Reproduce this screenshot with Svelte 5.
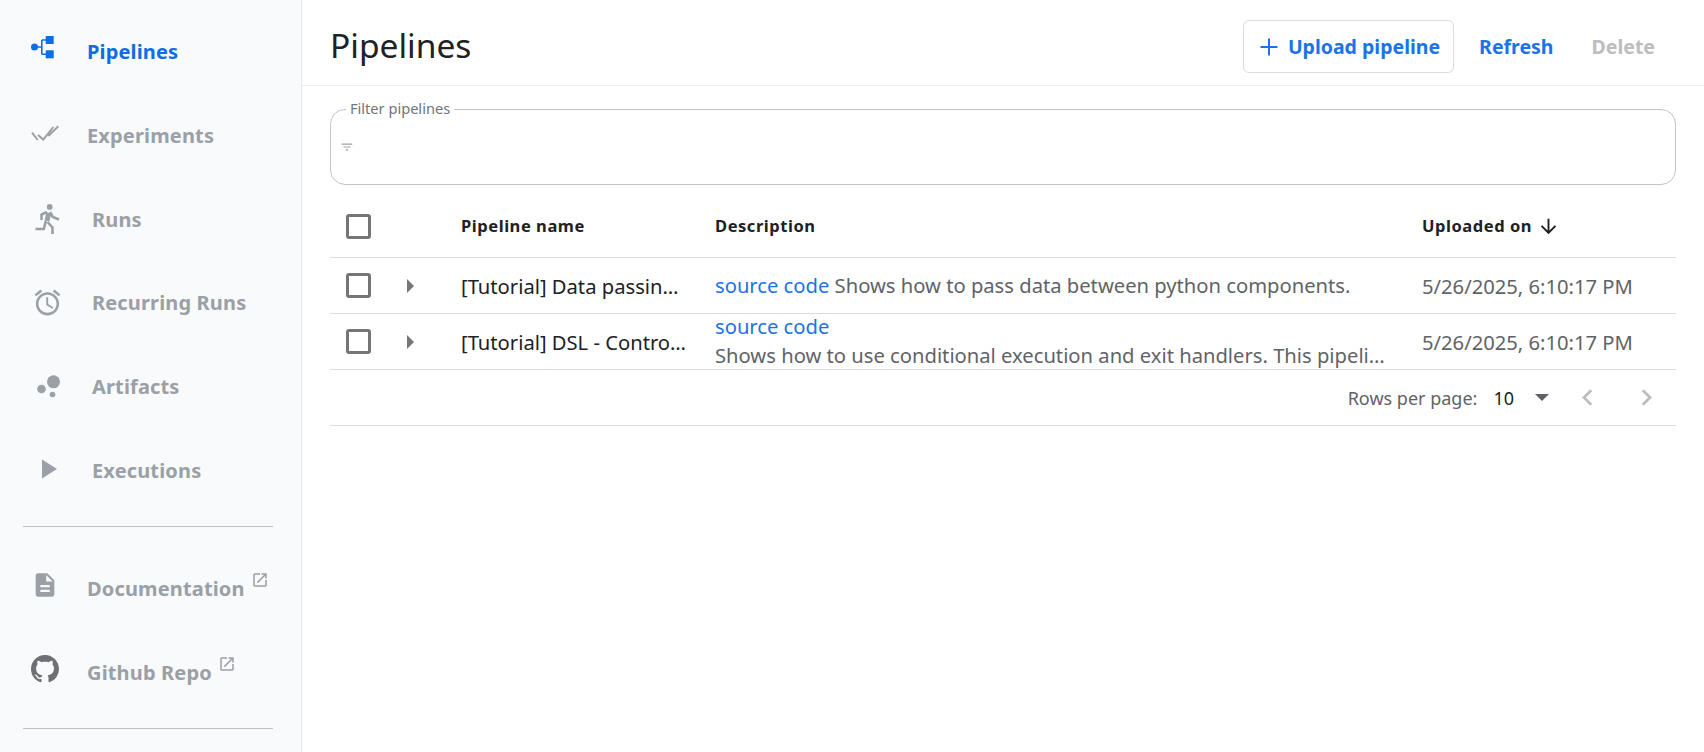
<script lang="ts">
  const navTop = [
    { label: 'Pipelines', icon: 'pipelines', active: true, indent: false },
    { label: 'Experiments', icon: 'experiments', active: false, indent: false },
    { label: 'Runs', icon: 'runs', active: false, indent: true },
    { label: 'Recurring Runs', icon: 'recurring', active: false, indent: true },
    { label: 'Artifacts', icon: 'artifacts', active: false, indent: true },
    { label: 'Executions', icon: 'executions', active: false, indent: true }
  ];

  const rows = [
    {
      name: '[Tutorial] Data passing in python components',
      inline: true,
      desc: 'Shows how to pass data between python components.',
      date: '5/26/2025, 6:10:17 PM'
    },
    {
      name: '[Tutorial] DSL - Control structures',
      inline: false,
      desc: 'Shows how to use conditional execution and exit handlers. This pipeline will randomly fail to demonstrate that the exit handler gets executed even when the pipeline fails.',
      date: '5/26/2025, 6:10:17 PM'
    }
  ];
</script>

{#snippet externalIcon()}
  <svg class="ext" viewBox="0 0 24 24" aria-hidden="true">
    <path d="M19 19H5V5h7V3H5a2 2 0 0 0-2 2v14a2 2 0 0 0 2 2h14c1.100 0 2-.9 2-2v-7h-2v7zM14 3v2h3.590l-9.830 9.830 1.410 1.410L19 6.410V10h2V3h-7z" />
  </svg>
{/snippet}

{#snippet checkbox()}
  <span class="checkbox"></span>
{/snippet}

<div class="app">
  <nav class="sidebar">
    <ul class="nav-list">
      {#each navTop as item}
        <li class="nav-item" class:active={item.active} class:indent={item.indent}>
          <span class="nav-icon icon-{item.icon}">
            {#if item.icon === 'pipelines'}
              <svg width="24" height="24" viewBox="0 0 24 24">
                <circle cx="3.500" cy="12" r="3.500" />
                <rect x="14.700" y="1" width="8" height="8" />
                <rect x="14.700" y="15.300" width="8" height="8" />
                <path class="line" stroke-width="1.600" d="M6 12h5M10.800 5v14.300M10.800 5H15M10.800 19.300H15" />
              </svg>
            {:else if item.icon === 'experiments'}
              <svg width="28" height="18" viewBox="0 0 28 18">
                <path class="line" stroke-width="2" d="M1 8.700L6.700 16M7 11L12.300 15.500L22.300 3M17.300 12L27.300 2.300" />
              </svg>
            {:else if item.icon === 'runs'}
              <svg width="25" height="31" viewBox="0 0 25 31">
                <circle cx="14.700" cy="2.900" r="2.900" />
                <path class="line" stroke-width="5" d="M13.800 9L12 17" />
                <path class="line" stroke-width="2.600" d="M12 8L6.500 10.500V16M15 8L17.800 13L24 15.500M10.800 17L8.800 25H.5M12.500 18L17.500 23.500V30" />
              </svg>
            {:else if item.icon === 'recurring'}
              <svg width="31" height="31" viewBox="0 0 24 24">
                <path d="M22 5.720l-4.600-3.860-1.290 1.530 4.600 3.860L22 5.720zM7.880 3.390 6.600 1.860 2 5.710l1.290 1.530 4.590-3.850zM12.500 8H11v6l4.750 2.850.75-1.230-4-2.370V8zM12 4c-4.970 0-9 4.030-9 9s4.030 9 9 9 9-4.030 9-9-4.030-9-9-9zm0 16c-3.870 0-7-3.130-7-7s3.130-7 7-7 7 3.130 7 7-3.130 7-7 7z" />
              </svg>
            {:else if item.icon === 'artifacts'}
              <svg width="24" height="24" viewBox="0 0 24 24">
                <circle cx="4.500" cy="14" r="4.300" />
                <circle cx="16.500" cy="6.800" r="6.500" />
                <circle cx="15.500" cy="19.500" r="2.800" />
              </svg>
            {:else if item.icon === 'executions'}
              <svg width="18" height="22" viewBox="0 0 18 22">
                <path d="M2 1.500v19L17 11z" />
              </svg>
            {/if}
          </span>
          <span class="nav-label">{item.label}</span>
        </li>
      {/each}
    </ul>

    <hr class="divider" />

    <a class="nav-item" href="#docs">
      <span class="nav-icon icon-link">
        <svg width="28" height="28" viewBox="0 0 24 24">
          <path d="M14 2H6c-1.100 0-1.990.9-1.990 2L4 20c0 1.100.89 2 1.990 2H18c1.100 0 2-.9 2-2V8l-6-6zm2 16H8v-2h8v2zm0-4H8v-2h8v2zm-3-5V3.500L18.500 9H13z" />
        </svg>
      </span>
      <span class="nav-label">Documentation</span>
      {@render externalIcon()}
    </a>

    <a class="nav-item" href="#github">
      <span class="nav-icon icon-link github">
        <svg width="28" height="28" viewBox="0 0 16 16">
          <path d="M8 0C3.580 0 0 3.580 0 8c0 3.540 2.290 6.530 5.470 7.590.4.070.55-.17.55-.38 0-.19-.01-.82-.01-1.490-2.010.37-2.530-.49-2.690-.94-.09-.23-.48-.94-.82-1.130-.28-.15-.68-.52-.01-.53.63-.01 1.080.58 1.230.82.720 1.210 1.870.87 2.330.66.070-.52.280-.87.510-1.070-1.780-.2-3.640-.89-3.640-3.950 0-.87.310-1.590.820-2.150-.08-.2-.36-1.020.08-2.120 0 0 .67-.21 2.200.82.640-.18 1.320-.27 2-.27s1.360.09 2 .27c1.530-1.040 2.200-.82 2.200-.82.440 1.100.16 1.920.08 2.120.51.560.82 1.270.82 2.150 0 3.070-1.870 3.750-3.650 3.950.29.250.54.730.54 1.480 0 1.070-.01 1.930-.01 2.200 0 .21.150.46.550.38A8.010 8.010 0 0 0 16 8c0-4.420-3.580-8-8-8z" />
        </svg>
      </span>
      <span class="nav-label">Github Repo</span>
      {@render externalIcon()}
    </a>

    <hr class="divider last" />
  </nav>

  <main class="content">
    <header class="toolbar">
      <h1 class="title">Pipelines</h1>
      <div class="actions">
        <button class="btn outlined">
          <svg class="plus" width="24" height="24" viewBox="0 0 24 24" aria-hidden="true">
            <path d="M12 3.500v17M3.500 12h17" />
          </svg>
          Upload pipeline
        </button>
        <button class="btn">Refresh</button>
        <button class="btn disabled">Delete</button>
      </div>
    </header>

    <section class="body">
      <fieldset class="filter">
        <legend>Filter pipelines</legend>
        <svg class="filter-icon" width="14" height="14" viewBox="0 0 24 24" aria-hidden="true">
          <path d="M10 18h4v-2h-4v2zM3 6v2h18V6H3zm3 7h12v-2H6v2z" />
        </svg>
      </fieldset>

      <div class="thead row">
        <div class="c-check">{@render checkbox()}</div>
        <div class="c-expand"></div>
        <div class="c-name">Pipeline name</div>
        <div class="c-desc">Description</div>
        <div class="c-date">
          Uploaded on
          <svg class="sort" width="23" height="23" viewBox="0 0 24 24" aria-hidden="true">
            <path d="M20 12l-1.410-1.410L13 16.170V4h-2v12.170l-5.580-5.590L4 12l8 8 8-8z" />
          </svg>
        </div>
      </div>

      {#each rows as row}
        <div class="tr row">
          <div class="c-check">{@render checkbox()}</div>
          <div class="c-expand"><span class="caret"></span></div>
          <div class="c-name name-text">{row.name}</div>
          <div class="c-desc desc-text" class:stacked={!row.inline}>
            {#if row.inline}
              <span class="truncate"><a href="#source">source code</a> {row.desc}</span>
            {:else}
              <a href="#source">source code</a>
              <span class="truncate">{row.desc}</span>
            {/if}
          </div>
          <div class="c-date date-text">{row.date}</div>
        </div>
      {/each}

      <div class="pager">
        <span class="pager-label">Rows per page:</span>
        <span class="pager-value">10</span>
        <span class="pager-arrow"></span>
        <svg class="chev" width="33" height="33" viewBox="0 0 24 24" aria-hidden="true">
          <path d="M15.410 7.410 14 6l-6 6 6 6 1.410-1.410L10.830 12z" />
        </svg>
        <svg class="chev" width="33" height="33" viewBox="0 0 24 24" aria-hidden="true">
          <path d="M10 6 8.590 7.410 13.170 12l-4.580 4.590L10 18l6-6z" />
        </svg>
      </div>
    </section>
  </main>
</div>

<style>
  :global(body) {
    margin: 0;
    background: #fff;
    font-family: 'Noto Sans', 'Open Sans', sans-serif;
  }

  .app {
    display: flex;
    height: 752px;
    overflow: hidden;
  }

  .sidebar {
    width: 302px;
    flex-shrink: 0;
    box-sizing: border-box;
    background: #f8fafb;
    border-right: 1px solid #e6e8ea;
    padding-top: 10px;
  }

  .nav-list {
    list-style: none;
    margin: 0;
    padding: 0;
  }

  .nav-item {
    display: flex;
    align-items: center;
    height: 84px;
    padding-left: 31px;
    color: #9aa0a6;
    font-size: 20px;
    font-weight: 700;
    letter-spacing: 0.15px;
    text-decoration: none;
    box-sizing: border-box;
  }

  .nav-list .nav-item {
    height: 83.7px;
  }

  .nav-item.active {
    color: #0d6de4;
  }

  .nav-icon {
    width: 56px;
    flex-shrink: 0;
    display: flex;
    align-items: center;
    height: 100%;
    box-sizing: border-box;
  }

  .nav-icon svg {
    fill: currentColor;
  }

  .nav-icon .line {
    fill: none;
    stroke: currentColor;
  }

  .nav-item.indent .nav-icon {
    width: 61px;
  }

  .icon-pipelines {
    padding-bottom: 10px;
  }

  .icon-experiments {
    padding-bottom: 6px;
  }

  .icon-link {
    padding-bottom: 6px;
  }

  .nav-item.indent .icon-runs {
    padding-left: 4px;
  }

  .nav-item.indent .icon-recurring {
    padding-left: 1px;
  }

  .nav-item.indent .icon-artifacts {
    padding-left: 6px;
  }

  .nav-item.indent .icon-executions {
    padding-left: 9px;
    padding-bottom: 2px;
  }

  .github {
    color: #6d7074;
  }

  .divider {
    border: 0;
    border-top: 1px solid #bdc1c6;
    margin: 14px 28px 19px 23px;
  }

  .divider.last {
    margin-top: 14px;
    margin-bottom: 0;
  }

  .ext {
    width: 18px;
    height: 18px;
    fill: #9aa0a6;
    margin: -17px 0 0 6px;
  }

  .content {
    flex: 1;
    min-width: 0;
  }

  .toolbar {
    height: 86px;
    box-sizing: border-box;
    border-bottom: 1px solid #eceef0;
    display: flex;
    align-items: center;
    justify-content: space-between;
    padding: 8px 28px 0 28px;
  }

  .title {
    margin: 0 0 4px;
    font-size: 33.5px;
    font-weight: 400;
    color: #202124;
  }

  .actions {
    display: flex;
    align-items: center;
  }

  .btn {
    font: inherit;
    font-size: 19.5px;
    font-weight: 700;
    color: #1a73e8;
    background: none;
    border: 1px solid transparent;
    border-radius: 6px;
    height: 53px;
    padding: 0 20px;
    display: flex;
    align-items: center;
    gap: 7px;
  }

  .btn.outlined {
    border-color: #dadce0;
    padding: 0 13px 0 13px;
    margin-right: 4px;
  }

  .plus {
    fill: none;
    stroke: currentColor;
    stroke-width: 2;
  }

  .btn.disabled {
    color: #bdbdbd;
    padding-left: 16px;
  }

  .body {
    padding: 15px 28px 0 28px;
  }

  .filter {
    margin: 0;
    padding: 0 0 0 9px;
    height: 84px;
    box-sizing: border-box;
    border: 1px solid #c4c4c4;
    border-radius: 15px;
    display: flex;
    align-items: center;
  }

  .filter legend {
    margin-left: 6px;
    padding: 0 4px 2px;
    color: #70757a;
    font-size: 14.6px;
    line-height: 14px;
  }

  .filter-icon {
    fill: #9aa0a6;
    margin-bottom: 8px;
  }

  .row {
    display: flex;
    align-items: center;
    box-sizing: border-box;
    border-bottom: 1px solid #dadce0;
  }

  .thead {
    height: 73px;
    padding-top: 9px;
    font-size: 16.5px;
    font-weight: 700;
    letter-spacing: 0.55px;
    color: #202124;
  }

  .thead .checkbox {
    margin-top: 2px;
  }

  .tr {
    height: 56px;
  }

  .c-check {
    width: 72px;
    padding-left: 16px;
    box-sizing: border-box;
    display: flex;
  }

  .c-expand {
    width: 59px;
    flex-shrink: 0;
  }

  .c-name {
    width: 254px;
    flex-shrink: 0;
    box-sizing: border-box;
    padding-right: 26px;
  }

  .c-desc {
    width: 707px;
    flex-shrink: 0;
    box-sizing: border-box;
    padding-right: 32px;
    min-width: 0;
  }

  .c-date {
    flex: 1;
    display: flex;
    align-items: center;
    gap: 5px;
  }

  .sort {
    margin-top: 2px;
    fill: #202124;
  }

  .checkbox {
    width: 19px;
    height: 19px;
    border: 3px solid #757575;
    border-radius: 3px;
    display: block;
  }

  .caret {
    display: block;
    width: 0;
    height: 0;
    margin-left: 5px;
    border-left: 7px solid #757575;
    border-top: 7px solid transparent;
    border-bottom: 7px solid transparent;
  }

  .name-text {
    font-size: 20.2px;
    color: #202124;
    white-space: nowrap;
    overflow: hidden;
    text-overflow: ellipsis;
  }

  .desc-text {
    font-size: 20.2px;
    color: #5f6368;
    line-height: 29px;
  }

  .desc-text.stacked {
    padding-bottom: 2px;
  }

  .desc-text a {
    color: #1a73e8;
    text-decoration: none;
  }

  .desc-text.stacked a {
    display: block;
  }

  .truncate {
    display: block;
    white-space: nowrap;
    overflow: hidden;
    text-overflow: ellipsis;
  }

  .date-text {
    font-size: 20.2px;
    color: #5f6368;
  }

  .pager {
    height: 56px;
    box-sizing: border-box;
    border-bottom: 1px solid #dadce0;
    display: flex;
    align-items: center;
    justify-content: flex-end;
    font-size: 18px;
    padding-right: 13px;
  }

  .pager-label {
    color: #5f6368;
  }

  .pager-value {
    color: #202124;
    margin-left: 16px;
  }

  .pager-arrow {
    width: 0;
    height: 0;
    margin: 0 22px 0 21px;
    border-top: 7px solid #5f6368;
    border-left: 7px solid transparent;
    border-right: 7px solid transparent;
  }

  .chev {
    fill: #bdbdbd;
  }

  .chev + .chev {
    margin-left: 26px;
  }
</style>
